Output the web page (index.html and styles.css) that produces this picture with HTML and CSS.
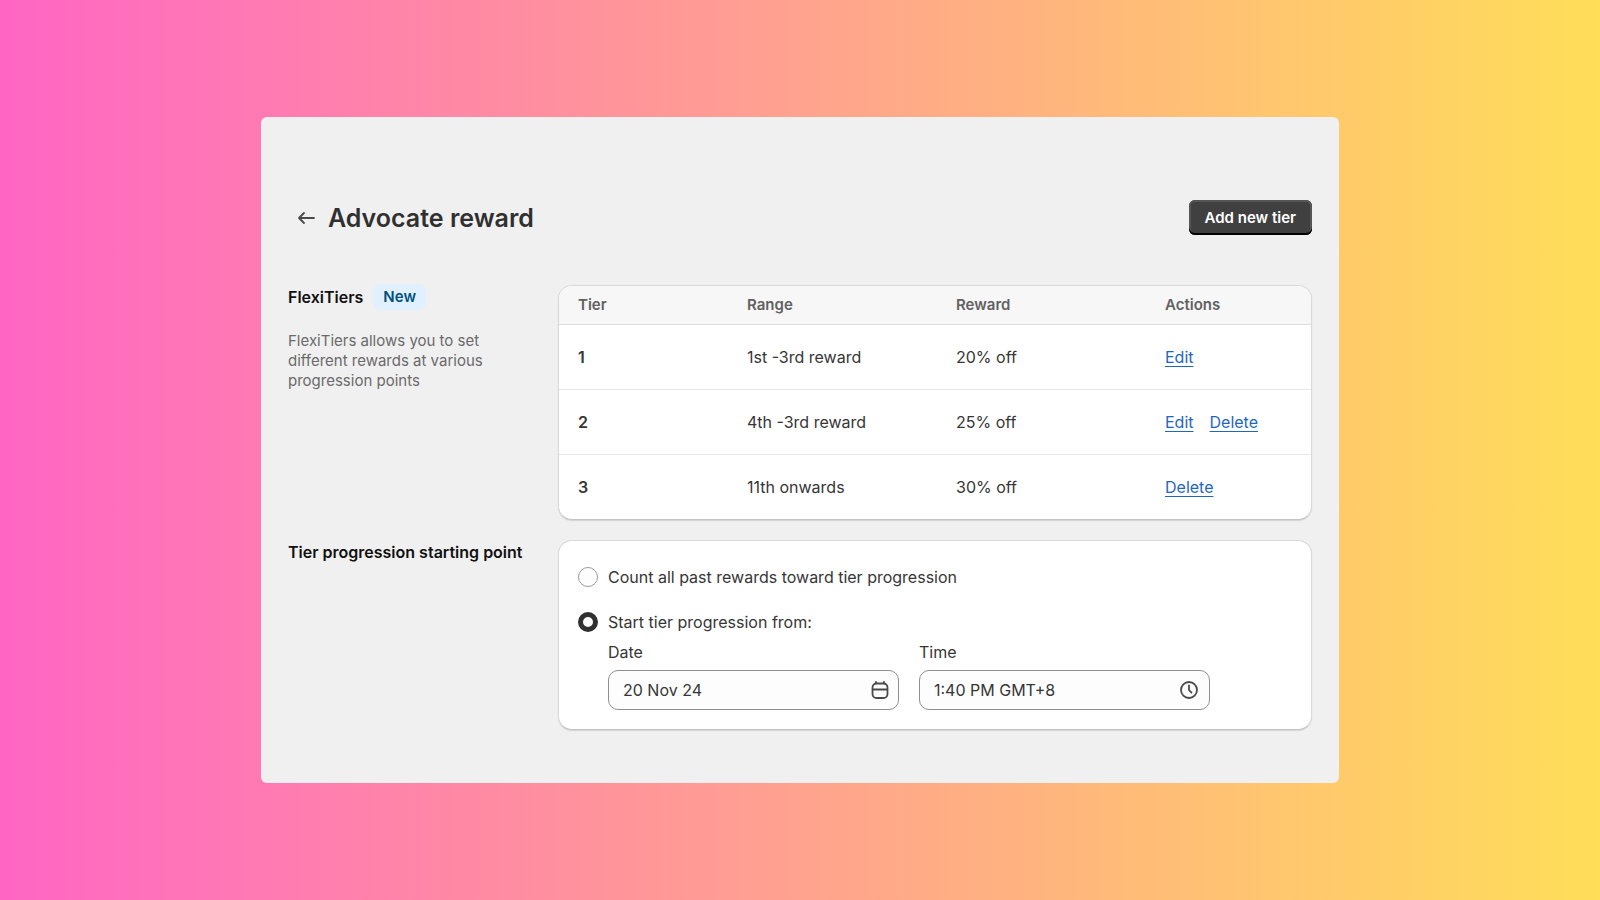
FILE: index.html
```html
<!doctype html>
<html lang="en">
  <head>
    <meta charset="utf-8">
    <title>Advocate reward</title>
    <link rel="stylesheet" href="styles.css">
  </head>
  <body>
    <main class="panel">
      <header class="page-header">
        <a class="back" href="#" aria-label="Back">
          <svg width="18" height="14" viewBox="0 0 18 14" fill="none" stroke="#4a4a4a" stroke-width="1.800" stroke-linecap="round" stroke-linejoin="round">
            <path d="M17 7H2M7 2L2 7l5 5"/>
          </svg>
        </a>
        <h1>Advocate reward</h1>
        <button type="button" class="btn-add">Add new tier</button>
      </header>

      <section class="row">
        <div class="info">
          <h2>FlexiTiers <span class="badge">New</span></h2>
          <p>FlexiTiers allows you to set different rewards at various progression points</p>
        </div>
        <div class="card">
          <table>
            <thead>
              <tr>
                <th class="col-tier">Tier</th>
                <th class="col-range">Range</th>
                <th class="col-reward">Reward</th>
                <th>Actions</th>
              </tr>
            </thead>
            <tbody>
              <tr>
                <td class="tier">1</td>
                <td>1st -3rd reward</td>
                <td>20% off</td>
                <td><div class="actions"><a href="#">Edit</a></div></td>
              </tr>
              <tr>
                <td class="tier">2</td>
                <td>4th -3rd reward</td>
                <td>25% off</td>
                <td><div class="actions"><a href="#">Edit</a><a href="#">Delete</a></div></td>
              </tr>
              <tr>
                <td class="tier">3</td>
                <td>11th onwards</td>
                <td>30% off</td>
                <td><div class="actions"><a href="#">Delete</a></div></td>
              </tr>
            </tbody>
          </table>
        </div>
      </section>

      <section class="row">
        <div class="info">
          <h2>Tier progression starting point</h2>
        </div>
        <form class="card card-form">
          <div class="choice">
            <input type="radio" name="start" id="start-all">
            <label for="start-all">Count all past rewards toward tier progression</label>
          </div>
          <div class="choice">
            <input type="radio" name="start" id="start-from" checked>
            <label for="start-from">Start tier progression from:</label>
          </div>
          <div class="fields">
            <div class="field">
              <label for="date">Date</label>
              <div class="input-box">
                <input type="text" id="date" value="20 Nov 24">
                <svg width="18" height="18" viewBox="0 0 18 18" fill="none" stroke="#4a4a4a" stroke-width="1.800" stroke-linecap="round">
                  <rect x="1.5" y="2.5" width="15" height="14.500" rx="4"/>
                  <path d="M2 8.500h14M5 1v1M13 1v1"/>
                </svg>
              </div>
            </div>
            <div class="field">
              <label for="time">Time</label>
              <div class="input-box input-time">
                <input type="text" id="time" value="1:40 PM GMT+8">
                <svg width="18" height="18" viewBox="0 0 18 18" fill="none" stroke="#4a4a4a" stroke-width="1.800" stroke-linecap="round" stroke-linejoin="round">
                  <circle cx="9" cy="9" r="8"/>
                  <path d="M9 4.500v4.500l2.500 2.700"/>
                </svg>
              </div>
            </div>
          </div>
        </form>
      </section>
    </main>
  </body>
</html>
```
FILE: styles.css
```css
* {
  box-sizing: border-box;
}
body {
  margin: 0;
  min-height: 100vh;
  display: flex;
  align-items: center;
  justify-content: center;
  background: linear-gradient(90deg, #ff66c4, #ffde59);
  font-family: Inter, "Liberation Sans", sans-serif;
  font-size: 16px;
  line-height: 20px;
  color: #363636;
}
h1, h2, p {
  margin: 0;
}
.panel {
  width: 100%;
  max-width: 1078px;
  padding: 83px 27px 53px;
  background: #f0f0f0;
  border-radius: 6px;
}
.page-header {
  display: flex;
  align-items: center;
  margin-bottom: 50px;
}
.back {
  display: flex;
  margin: 0 13px 0 9px;
}
h1 {
  font-size: 25px;
  line-height: 32px;
  font-weight: 600;
  color: #303030;
}
.btn-add {
  margin-left: auto;
  height: 35px;
  padding: 0 16px;
  border: 0;
  border-radius: 6px;
  background: #404040;
  box-shadow: inset 0 -2px 0 #000, inset 0 0 0 2px #555;
  color: #fff;
  font: inherit;
  font-size: 15px;
  font-weight: 600;
  cursor: pointer;
}
.row {
  display: grid;
  grid-template-columns: 250px 1fr;
  gap: 20px;
  margin-bottom: 20px;
}
.row:last-child {
  margin-bottom: 0;
}
.info h2 {
  display: flex;
  align-items: center;
  gap: 10px;
  height: 24px;
  font-size: 16px;
  font-weight: 600;
  color: #111;
}
.badge {
  padding: 3px 10px;
  border-radius: 8px;
  background: #e0f0ff;
  color: #00527c;
  font-size: 15px;
}
.info p {
  max-width: 210px;
  margin-top: 22px;
  font-size: 15px;
  color: #6a6a6a;
}
.card {
  background: #fff;
  border: 1px solid #d9d9d9;
  border-bottom-color: #c4c4c4;
  border-radius: 14px;
  box-shadow: 0 1px 1px rgba(0, 0, 0, 0.12);
  overflow: hidden;
}
table {
  width: 100%;
  table-layout: fixed;
  border-collapse: collapse;
}
.col-tier {
  width: 169px;
}
.col-range, .col-reward {
  width: 209px;
}
th {
  height: 38px;
  padding: 0 0 0 19px;
  background: #f7f7f7;
  border-bottom: 1px solid #dedede;
  color: #616161;
  font-size: 15px;
  font-weight: 600;
  text-align: left;
}
td {
  height: 65px;
  padding: 0 0 0 19px;
  border-bottom: 1px solid #e6e6e6;
}
tr:last-child td {
  border-bottom: 0;
}
.tier {
  font-weight: 600;
}
.actions {
  display: flex;
  gap: 16px;
}
.actions a {
  color: #1f66c1;
  text-decoration: underline;
  text-underline-offset: 3px;
}
.card-form {
  padding: 26px 19px 19px;
}
.choice {
  display: flex;
  align-items: center;
  gap: 10px;
  margin-bottom: 25px;
}
.choice + .choice {
  margin-bottom: 10px;
}
.choice input {
  appearance: none;
  width: 20px;
  height: 20px;
  margin: 0;
  border: 1px solid #9a9a9a;
  border-radius: 50%;
  background: #fdfdfd;
}
.choice input:checked {
  border: 5px solid #303030;
}
.fields {
  display: flex;
  gap: 20px;
  padding: 0 82px 0 30px;
}
.field {
  flex: 1;
  min-width: 0;
}
.field label {
  display: block;
  margin-bottom: 8px;
}
.input-box {
  display: flex;
  align-items: center;
  height: 40px;
  padding: 0 9px 0 14px;
  border: 1px solid #8f8f8f;
  border-radius: 10px;
  background: #fdfdfd;
}
.input-time {
  padding-right: 11px;
}
.input-box input {
  flex: 1;
  min-width: 0;
  padding: 0;
  border: 0;
  background: none;
  color: inherit;
  font: inherit;
  outline: none;
}
```
